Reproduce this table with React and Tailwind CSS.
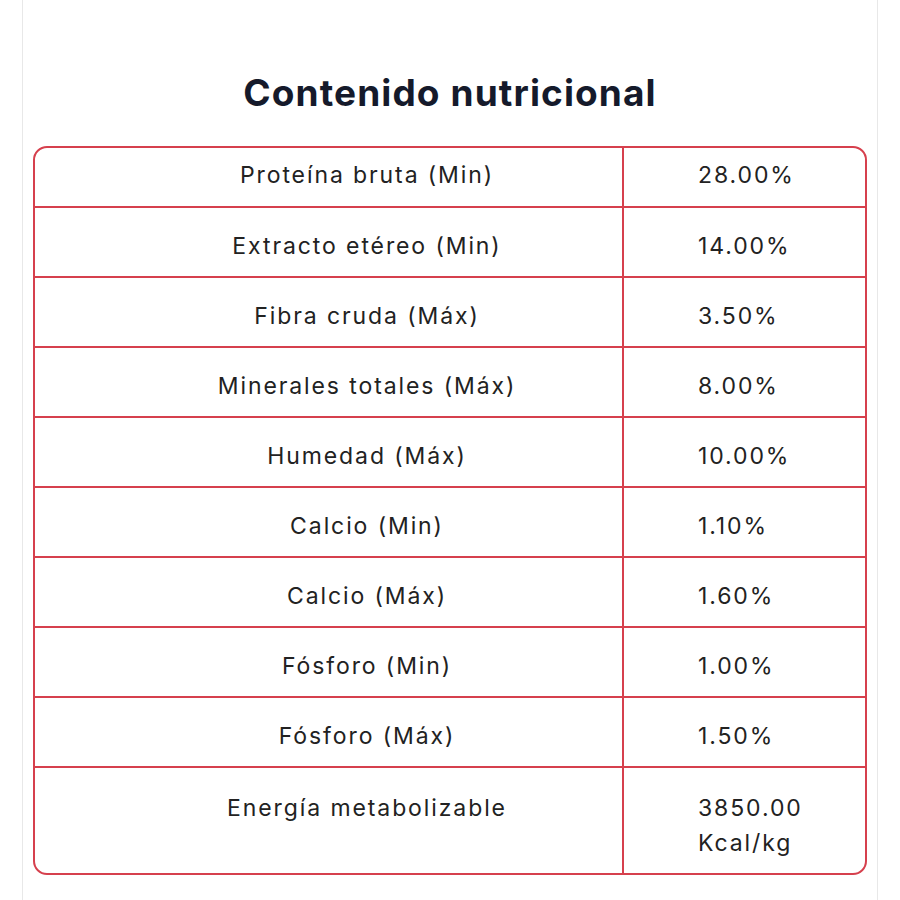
const rows = [
  ['Proteína bruta (Min)', '28.00%'],
  ['Extracto etéreo (Min)', '14.00%'],
  ['Fibra cruda (Máx)', '3.50%'],
  ['Minerales totales (Máx)', '8.00%'],
  ['Humedad (Máx)', '10.00%'],
  ['Calcio (Min)', '1.10%'],
  ['Calcio (Máx)', '1.60%'],
  ['Fósforo (Min)', '1.00%'],
  ['Fósforo (Máx)', '1.50%'],
  ['Energía metabolizable', '3850.00 Kcal/kg'],
];

const NutritionTable = () => {
  return (
    <div className="border-2 border-[#d6404d] rounded-[14px] overflow-hidden">
      {rows.map(([label, value], i) => {
        const first = i === 0;
        const last = i === rows.length - 1;
        const pad = first ? 'pt-[10px] pb-[13px]' : last ? 'pt-[23px] pb-[12px]' : 'pt-[21px] pb-[12px]';
        return (
          <div
            key={label}
            className={`grid grid-cols-[589px_1fr] ${last ? '' : 'border-b-2 border-[#d6404d]'}`}
          >
            <div className={`border-r-2 border-[#d6404d] text-center pl-[77px] ${pad}`}>
              {label}
            </div>
            <div className={`pl-[74px] pr-4 ${pad}`}>
              {last ? (
                <>
                  3850.00
                  <br />
                  Kcal/kg
                </>
              ) : (
                value
              )}
            </div>
          </div>
        );
      })}
    </div>
  );
};

export default function App() {
  return (
    <div className="w-[900px] h-[900px] bg-white" style={{ fontFamily: 'Inter, "Open Sans", sans-serif' }}>
      <div className="mx-[22px] h-full border-x border-[#e8e8e8] bg-white px-[10px]">
        <h2 className="pt-[70px] pb-[30px] text-center text-[37px] leading-[46px] font-bold text-[#151a2b] tracking-[1.1px]">
          Contenido nutricional
        </h2>
        <div className="text-[23px] leading-[35px] font-normal tracking-[1.9px] text-[#222222]">
          <NutritionTable />
        </div>
      </div>
    </div>
  );
}
